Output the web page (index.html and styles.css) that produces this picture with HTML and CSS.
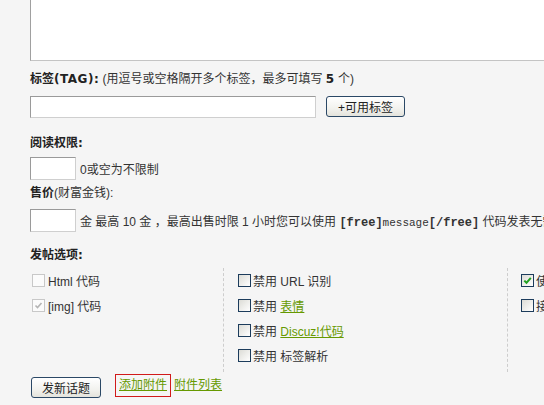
FILE: index.html
```html
<!DOCTYPE html>
<html lang="zh-CN">

<head>
    <meta charset="UTF-8">
    <title>发新话题</title>
    <link rel="stylesheet" href="styles.css">
</head>

<body>
    <div class="post-form">
        <div class="editor"></div>

        <p class="label label-tag"><b>标签<span class="lat">(TAG):</span></b> (用逗号或空格隔开多个标签，最多可填写 <b class="num">5</b> 个)</p>
        <div class="tag-row">
            <input class="txt tag-input" type="text">
            <button class="btn btn-tags">+可用标签</button>
        </div>

        <p class="label label-read"><b>阅读权限<span class="lat">:</span></b></p>
        <div class="field-row">
            <input class="txt small-input" type="text">
            <span>0或空为不限制</span>
        </div>

        <p class="label label-price"><b>售价</b>(财富金钱):</p>
        <div class="field-row price-row">
            <input class="txt small-input" type="text">
            <span class="price-note">金 最高 10 金 ，最高出售时限 1 小时您可以使用 <b class="code">[free]</b><span class="code-msg">message</span><b class="code">[/free]</b> 代码发表无需付费也能查看的免费信息</span>
        </div>

        <p class="label label-opts"><b>发帖选项<span class="lat">:</span></b></p>
        <div class="options">
            <div class="opt-col col-one">
                <label class="opt"><span class="box disabled"></span><span>Html 代码</span></label>
                <label class="opt"><span class="box disabled"><svg width="9" height="9" viewBox="0 0 9 9"><path d="M1.5 4.5 L3.5 6.5 L7.5 2" fill="none" stroke="#b4b4b4" stroke-width="1.6"/></svg></span><span>[img] 代码</span></label>
            </div>
            <div class="opt-col col-two">
                <label class="opt"><span class="box"></span><span>禁用 URL 识别</span></label>
                <label class="opt"><span class="box"></span><span>禁用 <a class="link" href="#">表情</a></span></label>
                <label class="opt"><span class="box"></span><span>禁用 <a class="link" href="#">Discuz!代码</a></span></label>
                <label class="opt"><span class="box"></span><span>禁用 标签解析</span></label>
            </div>
            <div class="opt-col col-three">
                <label class="opt"><span class="box"><svg width="9" height="9" viewBox="0 0 9 9"><path d="M1.3 4.6 L3.5 6.8 L7.8 1.8" fill="none" stroke="#21a121" stroke-width="2"/></svg></span><span>使用个人签名</span></label>
                <label class="opt"><span class="box"></span><span>接收新回复邮件通知</span></label>
            </div>
        </div>

        <div class="actions">
            <button class="btn btn-submit">发新话题</button>
            <a class="link attach-add" href="#">添加附件</a>
            <a class="link" href="#">附件列表</a>
        </div>
    </div>
</body>

</html>
```

FILE: styles.css
```css
body {
    margin: 0;
    padding: 0;
    background-color: #f5f5f5;
    font-family: "Liberation Sans", "Noto Sans CJK SC", sans-serif;
    font-size: 12px;
    color: #333;
    overflow: hidden;
}

.post-form {
    width: 900px;
    padding-left: 30px;
}

/* editor box, top is scrolled off */
.editor {
    width: 700px;
    height: 60px;
    background-color: #fff;
    border-left: 1px solid #a0a0a0;
    border-bottom: 1px solid #c4c4c4;
}

.label {
    margin: 0;
    line-height: 18px;
    white-space: nowrap;
}

.label b {
    color: #222;
}

.label .lat,
.label .num {
    font-family: "DejaVu Sans", sans-serif;
    letter-spacing: 0.5px;
}

.label-tag {
    margin-top: 9px;
}

.label-read {
    margin-top: 16px;
}

.label-price {
    margin-top: 4px;
}

.label-opts {
    margin-top: 14px;
}

/* inputs */
.txt {
    box-sizing: border-box;
    margin: 0;
    padding: 0 3px;
    background-color: #fff;
    border: 1px solid;
    border-color: #9a9a9a #cfcfcf #cfcfcf #9a9a9a;
    font-family: inherit;
    font-size: 12px;
}

.tag-row {
    display: flex;
    align-items: flex-start;
    margin-top: 8px;
}

.tag-input {
    width: 286px;
    height: 22px;
}

.field-row {
    display: flex;
    align-items: center;
    gap: 4px;
    margin-top: 5px;
    white-space: nowrap;
}

.price-row {
    margin-top: 7px;
}

.small-input {
    width: 46px;
    height: 23px;
}

.code {
    font-family: "Liberation Mono", monospace;
    font-size: 12px;
}

.code-msg {
    font-family: "Liberation Mono", monospace;
    font-size: 11px;
}

/* buttons */
.btn {
    box-sizing: border-box;
    height: 21px;
    padding: 0;
    border: 1px solid #2b4866;
    border-radius: 3px;
    background: linear-gradient(#ffffff, #f2f2ee 60%, #e4e3dc);
    color: #222;
    font-family: inherit;
    font-size: 12px;
    cursor: pointer;
}

.btn-tags {
    width: 79px;
    margin-left: 10px;
}

.btn-submit {
    width: 70px;
    margin-left: 1px;
    margin-top: 3px;
}

/* post options */
.options {
    display: grid;
    grid-template-columns: 193px 284px 200px;
    margin-top: 4px;
}

.opt-col {
    padding-bottom: 4px;
}

.col-one {
    padding-left: 2px;
}

.col-two {
    border-left: 1px dashed #cdcdcd;
    padding-left: 14px;
}

.col-three {
    border-left: 1px dashed #cdcdcd;
    padding-left: 13px;
}

.opt {
    display: flex;
    align-items: center;
    height: 25px;
    white-space: nowrap;
}

.box {
    box-sizing: border-box;
    display: flex;
    align-items: center;
    justify-content: center;
    width: 13px;
    height: 13px;
    margin-right: 2px;
    border: 1px solid #1c3c5c;
    background: linear-gradient(135deg, #dcdcd6, #ffffff);
}

.box.disabled {
    border-color: #c8c8c8;
    background: #fbfbfb;
    margin-right: 3px;
}

.link {
    color: #669900;
    text-decoration: underline;
}

/* bottom actions */
.actions {
    display: flex;
    align-items: flex-start;
    margin-top: 2px;
}

.attach-add {
    box-sizing: border-box;
    height: 23px;
    line-height: 21px;
    margin-left: 14px;
    padding: 0 3px;
    border: 1px solid #d11a1a;
    margin-right: 3px;
}

.actions .attach-add + .link {
    line-height: 23px;
}
```
